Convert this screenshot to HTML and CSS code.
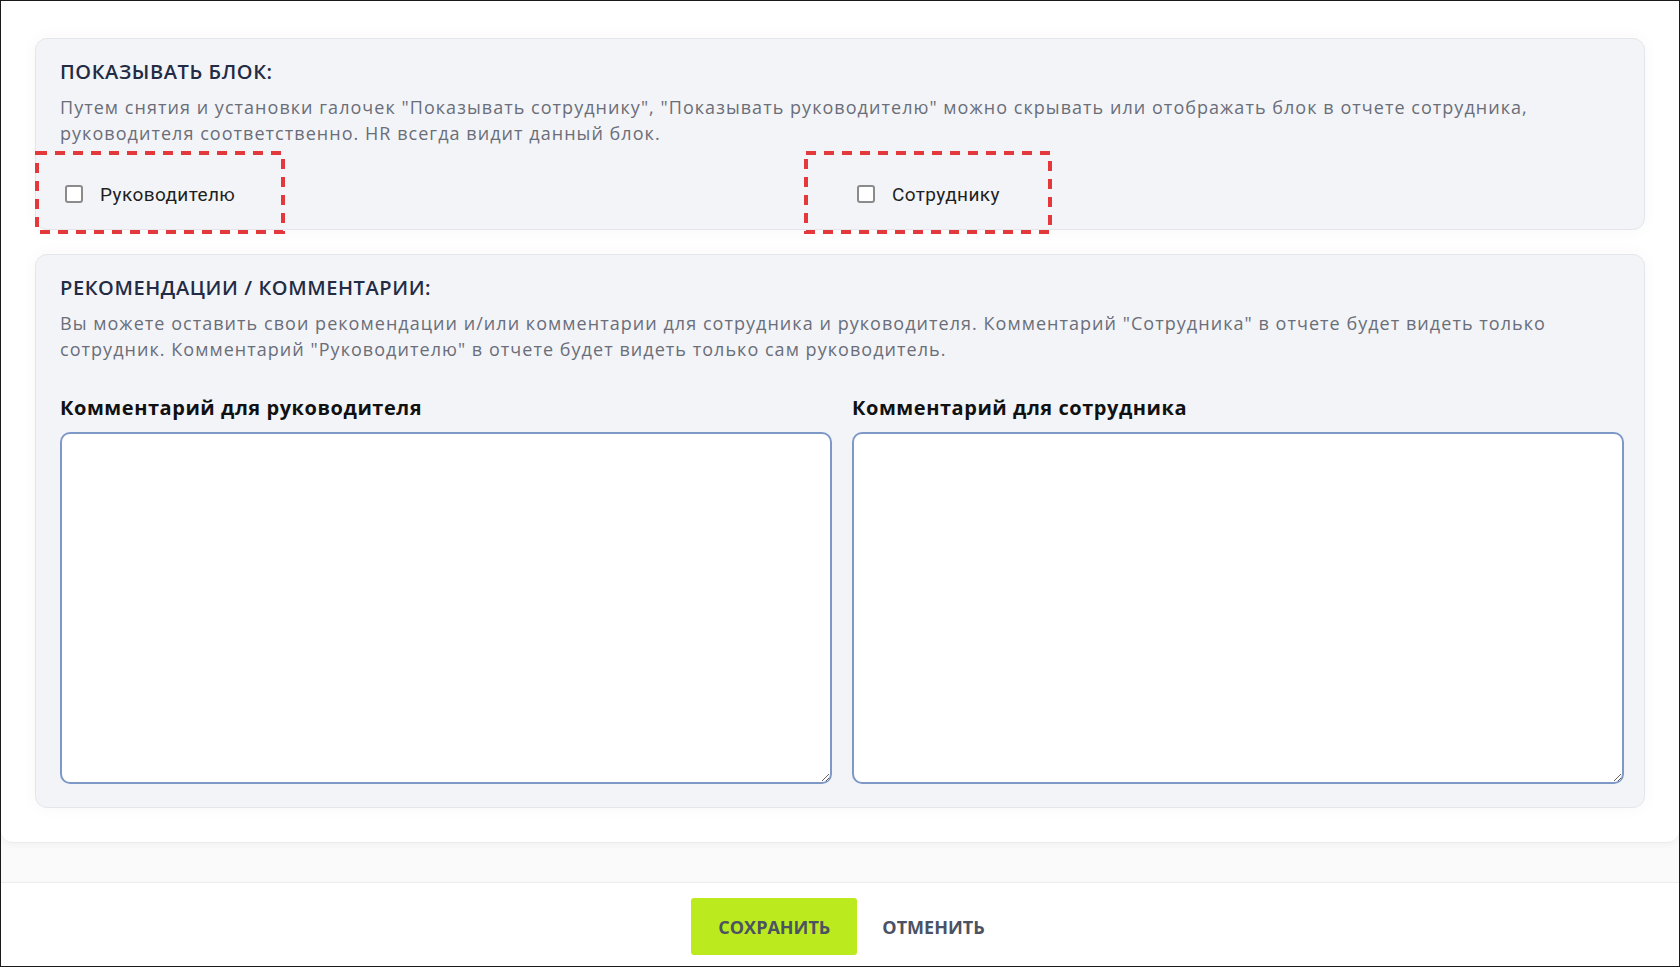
FILE: index.html
```html
<!DOCTYPE html>
<html lang="ru">
<head>
<meta charset="utf-8">
<title>Показывать блок</title>
<link rel="stylesheet" href="styles.css">
</head>
<body>
<div class="frame">
  <main class="panel">
    <section class="card card-visibility">
      <h2 class="card-title">ПОКАЗЫВАТЬ БЛОК:</h2>
      <p class="card-desc">Путем снятия и установки галочек "Показывать сотруднику", "Показывать руководителю" можно скрывать или отображать блок в отчете сотрудника, руководителя соответственно. HR всегда видит данный блок.</p>
      <div class="cols checks">
        <label class="check"><input type="checkbox" class="check-box"><span>Руководителю</span></label>
        <label class="check"><input type="checkbox" class="check-box"><span>Сотруднику</span></label>
      </div>
      <svg class="mark mark-1" width="250" height="83" viewBox="0 0 250 83"><rect x="2" y="2" width="246" height="79" fill="none" stroke="#e4393c" stroke-width="4" stroke-dasharray="10 8"/></svg>
      <svg class="mark mark-2" width="248" height="83" viewBox="0 0 248 83"><rect x="2" y="2" width="244" height="79" fill="none" stroke="#e4393c" stroke-width="4" stroke-dasharray="10 8"/></svg>
    </section>

    <section class="card card-comments">
      <h2 class="card-title">РЕКОМЕНДАЦИИ / КОММЕНТАРИИ:</h2>
      <p class="card-desc">Вы можете оставить свои рекомендации и/или комментарии для сотрудника и руководителя. Комментарий "Сотрудника" в отчете будет видеть только сотрудник. Комментарий "Руководителю" в отчете будет видеть только сам руководитель.</p>
      <div class="cols fields">
        <div class="field">
          <label class="field-label">Комментарий для руководителя</label>
          <textarea class="field-input"></textarea>
        </div>
        <div class="field">
          <label class="field-label">Комментарий для сотрудника</label>
          <textarea class="field-input"></textarea>
        </div>
      </div>
    </section>
  </main>

  <footer class="footer">
    <button class="btn btn-save">СОХРАНИТЬ</button>
    <button class="btn btn-cancel">ОТМЕНИТЬ</button>
  </footer>
</div>
</body>
</html>
```

FILE: styles.css
```css
* {
  box-sizing: border-box;
}

html,
body {
  margin: 0;
  padding: 0;
}

body {
  width: 1680px;
  height: 967px;
  overflow: hidden;
  background: #ffffff;
  font-family: "Open Sans", "Noto Sans", sans-serif;
}

.frame {
  height: 967px;
  border: 1px solid #1a1a1a;
  display: flex;
  flex-direction: column;
  background: linear-gradient(#f1f1f1, #fafafa 40px);
}

.panel {
  background: #ffffff;
  padding: 37px 34px 34px 34px;
  border-radius: 0 0 12px 12px;
  border-bottom: 1px solid #ebebeb;
  box-shadow: 0 2px 6px rgba(0, 0, 0, 0.04);
  display: flex;
  flex-direction: column;
  gap: 24px;
}

.card {
  position: relative;
  background: #f3f4f8;
  border: 1px solid #e4e6eb;
  border-radius: 12px;
  padding: 21px 20px 15px 24px;
  box-shadow: 0 0 18px rgba(0, 0, 0, 0.035);
}

.card-comments {
  padding-bottom: 23px;
}

.card-title {
  margin: 0;
  font-size: 20px;
  line-height: 24px;
  font-weight: 600;
  color: #232b45;
  letter-spacing: 0.6px;
}

.card-desc {
  margin: 10px 0 0;
  font-size: 18px;
  line-height: 26px;
  color: #6a6e78;
  letter-spacing: 1.04px;
}

.cols {
  display: grid;
  grid-template-columns: 1fr 1fr;
  column-gap: 20px;
}

.checks {
  margin-top: 28px;
  height: 40px;
  align-items: center;
}

.check {
  display: flex;
  align-items: center;
  font-family: Roboto, "Liberation Sans", sans-serif;
  font-size: 19px;
  letter-spacing: 0.4px;
  color: #1f1f1f;
}

.check-box {
  appearance: none;
  -webkit-appearance: none;
  width: 18px;
  height: 18px;
  margin: 0 17px 0 5px;
  border: 2px solid #8b8b8b;
  border-radius: 3px;
  background: #ffffff;
}

.mark {
  position: absolute;
  top: 112px;
  display: block;
}

.mark-1 {
  left: -1px;
}

.mark-2 {
  left: 768px;
}

.fields {
  margin-top: 34px;
}

.field {
  display: flex;
  flex-direction: column;
}

.field-label {
  font-size: 20px;
  line-height: 24px;
  font-weight: 700;
  color: #111111;
  letter-spacing: 0.55px;
  margin-bottom: 12px;
}

.field-input {
  display: block;
  width: 100%;
  height: 352px;
  border: 2px solid #7e98c8;
  border-radius: 10px;
  background: #ffffff;
  resize: both;
  font: inherit;
}

.footer {
  margin-top: auto;
  height: 84px;
  background: #ffffff;
  border-top: 1px solid #ececec;
  display: flex;
  justify-content: center;
  align-items: flex-start;
  padding: 15px 4px 0 0;
}

.btn {
  border: none;
  font-family: "Open Sans", "Noto Sans", sans-serif;
  font-weight: 700;
  font-size: 18px;
  color: #4b5263;
  cursor: pointer;
}

.btn-save {
  width: 166px;
  height: 57px;
  background: #bbea1e;
  border-radius: 3px;
}

.btn-cancel {
  height: 57px;
  margin-left: 25px;
  padding: 0;
  background: transparent;
}
```
